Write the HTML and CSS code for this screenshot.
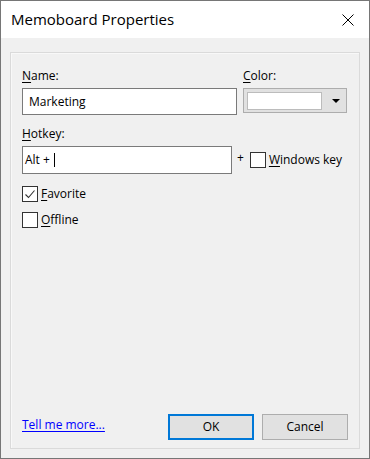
FILE: index.html
```html
<!DOCTYPE html>
<html>
<head>
<meta charset="utf-8">
<link rel="stylesheet" href="styles.css">
</head>
<body>
<div class="window">
  <div class="titlebar">
    <span class="title">Memoboard Properties</span>
    <span class="close">
      <svg width="12" height="12" viewBox="0 0 12 12"><path d="M0.5 0.5 L11.5 11.5 M11.5 0.5 L0.5 11.5" stroke="#000" stroke-width="1" fill="none"/></svg>
    </span>
  </div>
  <div class="content">
    <div class="panel">
      <div class="row1">
        <div class="field name-field">
          <div class="label"><u>N</u>ame:</div>
          <div class="textbox"><span class="value">Marketing</span></div>
        </div>
        <div class="field color-field">
          <div class="label"><u>C</u>olor:</div>
          <div class="combo">
            <span class="swatch"></span>
            <span class="arrow"></span>
          </div>
        </div>
      </div>
      <div class="field hotkey-field">
        <div class="label"><u>H</u>otkey:</div>
        <div class="hotkey-row">
          <div class="textbox hotkey-box"><span class="value hk">Alt +</span><span class="caret"></span></div>
          <span class="plus">+</span>
          <span class="check"></span>
          <span class="check-label"><u>W</u>indows key</span>
        </div>
      </div>
      <div class="check-row first">
        <span class="check checked">
          <svg width="14" height="14" viewBox="0 0 14 14"><path d="M2.5 7.5 L5.5 10.5 L11.5 3.5" stroke="#333" stroke-width="1.1" fill="none"/></svg>
        </span>
        <span class="check-label"><u>F</u>avorite</span>
      </div>
      <div class="check-row">
        <span class="check"></span>
        <span class="check-label"><u>O</u>ffline</span>
      </div>
      <div class="spacer"></div>
      <div class="footer">
        <a class="link" href="#">Tell me more...</a>
        <div class="buttons">
          <span class="btn default">OK</span>
          <span class="btn">Cancel</span>
        </div>
      </div>
    </div>
  </div>
</div>
</body>
</html>
```

FILE: styles.css
```css
* { box-sizing: border-box; }
html, body { margin: 0; padding: 0; }
body {
  width: 370px;
  height: 459px;
  font-family: "Open Sans", "Noto Sans", sans-serif;
  font-size: 12px;
  color: #000;
}
.window {
  width: 370px;
  height: 459px;
  border: 1px solid #767676;
  display: flex;
  flex-direction: column;
  background: #f0f0f0;
}
.titlebar {
  height: 37px;
  background: #fff;
  display: flex;
  align-items: center;
  padding-left: 10px;
  position: relative;
}
.title {
  font-size: 15px;
  line-height: 20px;
  margin-top: -2px;
}
.close {
  position: absolute;
  left: 341px;
  top: 13px;
  width: 12px;
  height: 12px;
  display: block;
}
.close svg { display: block; }
.content {
  flex: 1;
  padding: 14px 9px 9px 9px;
  display: flex;
}
.panel {
  flex: 1;
  border: 1px solid #dadada;
  box-shadow: inset 1px 1px 0 #f8f8f8;
  padding: 15px 11px 8px 11px;
  display: flex;
  flex-direction: column;
}
.row1 {
  display: flex;
  gap: 6px;
}
.name-field { width: 215px; }
.color-field { width: 104px; }
.label {
  line-height: 16px;
  height: 16px;
  margin-bottom: 4px;
}
u { text-decoration-thickness: 1px; text-underline-offset: 2px; }
.textbox {
  height: 27px;
  border: 1px solid #7a7a7a;
  background: #fff;
  display: flex;
  align-items: center;
  padding-left: 6px;
}
.value { line-height: 16px; }
.combo {
  margin-top: 1px;
  height: 25px;
  border: 1px solid #adadad;
  background: #e1e1e1;
  display: flex;
  align-items: center;
  padding-left: 3px;
}
.swatch {
  width: 75px;
  height: 18px;
  background: #fff;
  border: 1px solid #bcbcbc;
}
.arrow {
  margin-left: 10px;
  width: 0;
  height: 0;
  border-left: 4px solid transparent;
  border-right: 4px solid transparent;
  border-top: 4px solid #000;
  margin-top: 1px;
}
.hotkey-field { margin-top: 11px; }
.hotkey-row {
  display: flex;
  align-items: center;
  height: 28px;
}
.hotkey-box {
  width: 210px;
  height: 28px;
  padding-left: 2px;
}
.hk { margin-right: 4px; }
.caret {
  width: 1px;
  height: 14px;
  background: #000;
}
.plus {
  margin-left: 5px;
  margin-right: 6px;
  line-height: 16px;
  margin-top: -4px;
}
.check {
  width: 16px;
  height: 16px;
  border: 1px solid #333;
  background: #fff;
  display: flex;
  align-items: center;
  justify-content: center;
  flex: none;
}
.check svg { display: block; }
.check-label {
  margin-left: 3px;
  line-height: 16px;
}
.check-row {
  display: flex;
  align-items: center;
  height: 16px;
  margin-top: 10px;
}
.check-row.first { margin-top: 12px; }
.spacer { flex: 1; }
.footer {
  display: flex;
  align-items: center;
}
.link {
  color: #0000ff;
  text-decoration: underline;
  text-decoration-thickness: 1px;
  text-underline-offset: 2px;
  line-height: 16px;
  margin-top: -4px;
}
.buttons {
  margin-left: auto;
  display: flex;
  gap: 8px;
}
.btn {
  width: 86px;
  height: 26px;
  border: 1px solid #adadad;
  background: #e1e1e1;
  display: flex;
  align-items: center;
  justify-content: center;
  line-height: 16px;
}
.btn.default { border: 2px solid #0078d7; }
```
